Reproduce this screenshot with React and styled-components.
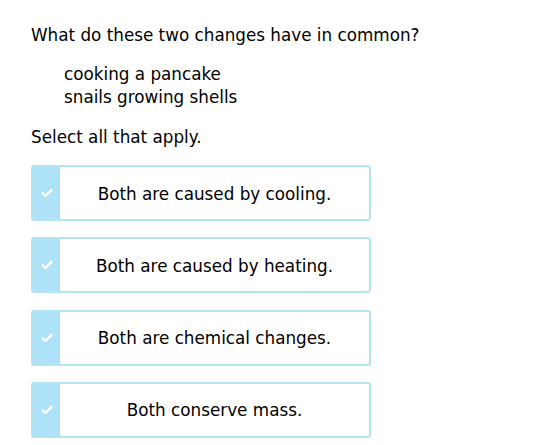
import React from 'react';
import styled, { createGlobalStyle } from 'styled-components';

const GlobalStyle = createGlobalStyle`
  body {
    margin: 0;
    background: #ffffff;
    font-family: Verdana, "DejaVu Sans", sans-serif;
    color: #000000;
  }
`

const Page = styled.div`
  padding: 23px 0 0 31px;
  width: 510px;
  box-sizing: border-box;
`

const Question = styled.div`
  font-size: 16.8px;
  line-height: 24px;
`

const Items = styled.div`
  margin: 16px 0 0 33px;
  font-size: 16.8px;
  line-height: 23px;
`

const Prompt = styled.div`
  margin-top: 16px;
  font-size: 16.8px;
  line-height: 24px;
`

const Choices = styled.div`
  margin-top: 16px;
  display: flex;
  flex-direction: column;
  gap: 16.3px;
`

const Choice = styled.div`
  display: flex;
  width: 340px;
  height: 56px;
  box-sizing: border-box;
  border: 2px solid #b6e3f2;
  border-radius: 3px;
  overflow: hidden;
  background: #ffffff;
`

const Check = styled.div`
  width: 27px;
  flex-shrink: 0;
  background: #ade2f8;
  display: flex;
  align-items: center;
  justify-content: center;
`

const Label = styled.div`
  flex: 1;
  display: flex;
  align-items: center;
  justify-content: center;
  font-size: 16.8px;
  padding-top: 1px;
`

const choices = [
  'Both are caused by cooling.',
  'Both are caused by heating.',
  'Both are chemical changes.',
  'Both conserve mass.',
]

export default function App() {
  return (
    <>
      <GlobalStyle />
      <Page>
        <Question>What do these two changes have in common?</Question>
        <Items>
          <div>cooking a pancake</div>
          <div>snails growing shells</div>
        </Items>
        <Prompt>Select all that apply.</Prompt>
        <Choices>
          {choices.map((c) => (
            <Choice key={c}>
              <Check>
                <svg width="12" height="10" viewBox="0 0 12 10">
                  <path d="M1.5 5.2 L4.6 8 L10.5 1.8" fill="none" stroke="#ffffff" strokeWidth="2.4" strokeLinecap="round" strokeLinejoin="round" />
                </svg>
              </Check>
              <Label>{c}</Label>
            </Choice>
          ))}
        </Choices>
      </Page>
    </>
  )
}
